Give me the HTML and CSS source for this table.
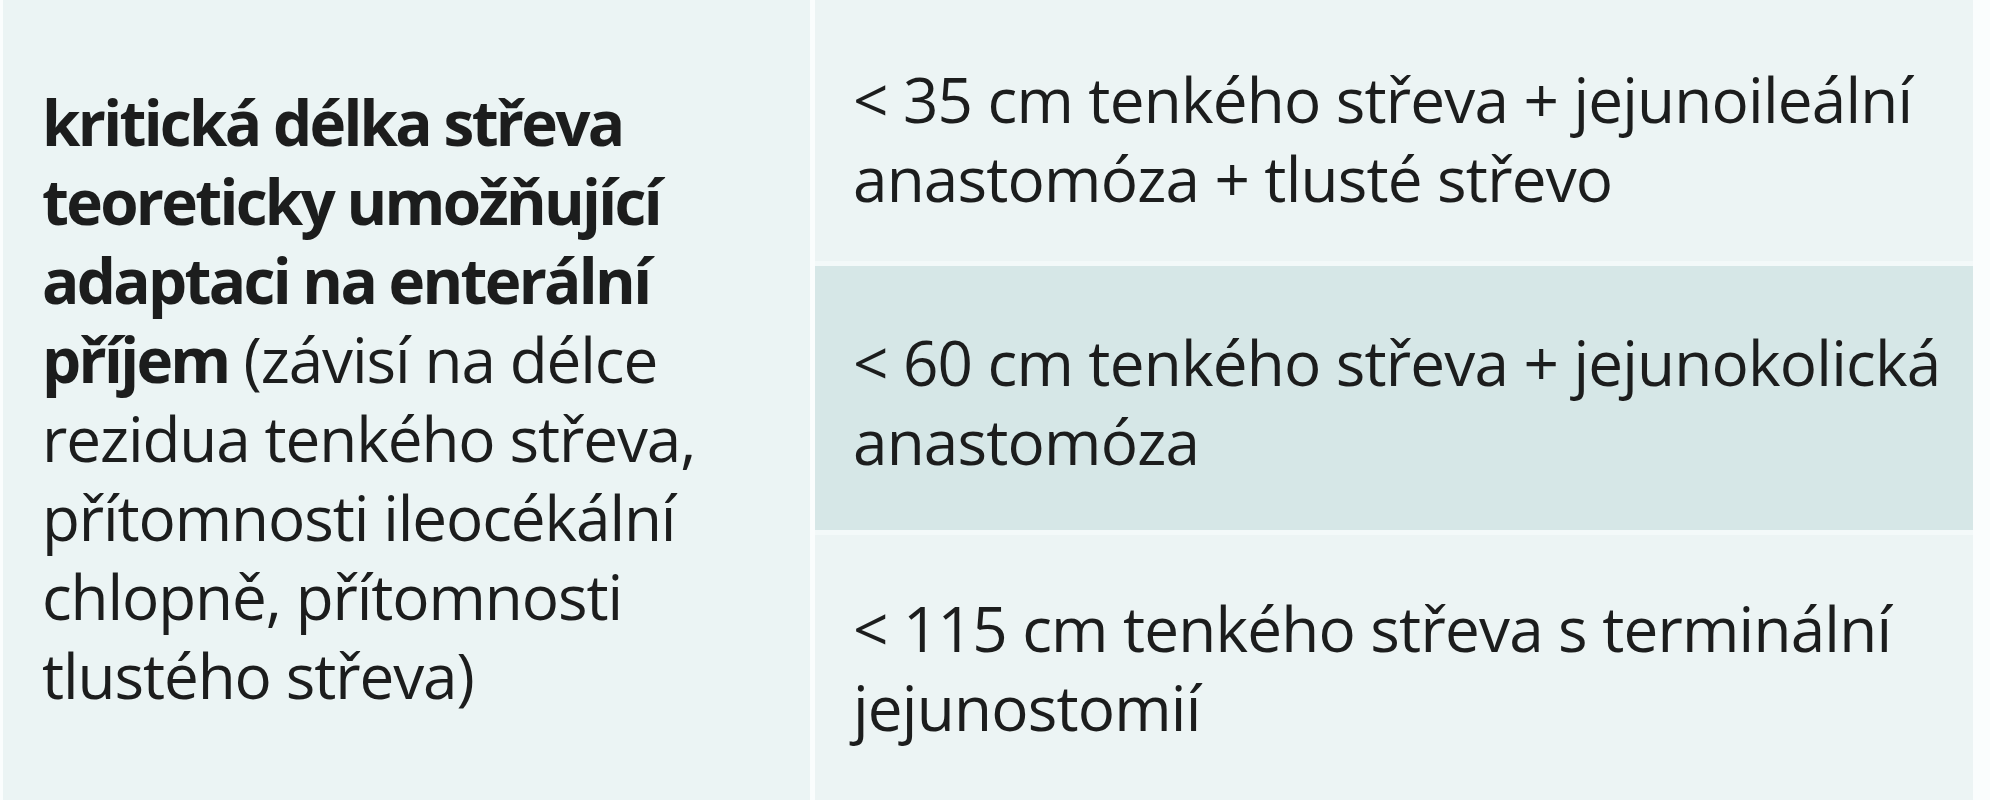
FILE: index.html
```html
<!DOCTYPE html>
<html lang="cs">
<head>
<meta charset="utf-8">
<title>Kritická délka střeva</title>
<link rel="stylesheet" href="styles.css">
</head>
<body>
<div class="table">
  <div class="cell-left">
    <p class="text text-left"><strong class="bold">kritická délka střeva<br>teoreticky umožňující<br>adaptaci na enterální<br>příjem</strong> (závisí na délce<br>rezidua tenkého střeva,<br>přítomnosti ileocékální<br>chlopně, přítomnosti<br>tlustého střeva)</p>
  </div>
  <div class="col-right">
    <div class="row row-light row-first">
      <p class="text">&lt; 35 cm tenkého střeva + jejunoileální<br>anastomóza + tlusté střevo</p>
    </div>
    <div class="row row-dark">
      <p class="text">&lt; 60 cm tenkého střeva + jejunokolická<br>anastomóza</p>
    </div>
    <div class="row row-light row-last">
      <p class="text">&lt; 115 cm tenkého střeva s terminální<br>jejunostomií</p>
    </div>
  </div>
</div>
</body>
</html>
```

FILE: styles.css
```css
html, body {
  margin: 0;
  padding: 0;
}

body {
  width: 1990px;
  height: 800px;
  overflow: hidden;
  background: #fafdfd;
  font-family: "Open Sans", "Noto Sans", sans-serif;
  color: #1c1d1d;
}

.table {
  display: grid;
  grid-template-columns: 807px 1158px;
  column-gap: 5px;
  padding-left: 3px;
  height: 800px;
}

.cell-left {
  background: #ebf4f4;
  padding: 83px 0 0 39px;
}

.col-right {
  display: flex;
  flex-direction: column;
  gap: 5px;
  background: #f3f9f9;
}

.row {
  padding: 57px 0 49px 38px;
}

.row-first {
  padding-top: 60px;
  padding-bottom: 43px;
}

.row-light {
  background: #ecf4f4;
}

.row-dark {
  background: #d6e7e7;
}

.row-last {
  flex: 1;
  padding-top: 54px;
}

.text {
  margin: 0;
  font-size: 62px;
  line-height: 79px;
  letter-spacing: -0.8px;
  white-space: nowrap;
}

.text-left {
  letter-spacing: -1.1px;
}

.bold {
  font-weight: 700;
  letter-spacing: -2.7px;
}
```
